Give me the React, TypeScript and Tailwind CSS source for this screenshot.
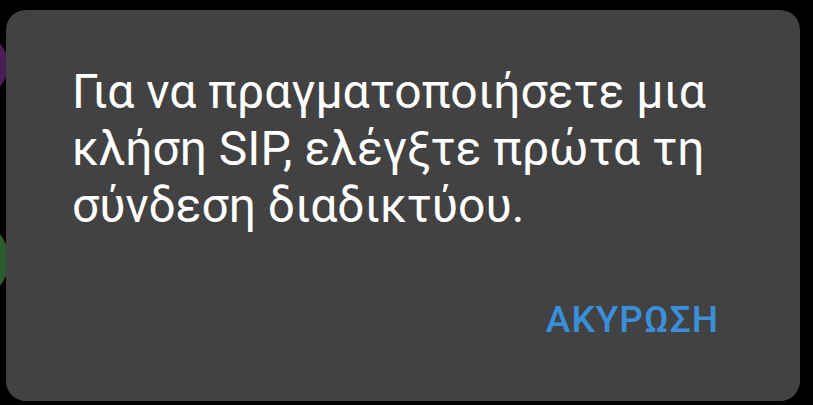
export default function App() {
  return (
    <div className="relative w-[813px] h-[405px] bg-black overflow-hidden" style={{ fontFamily: 'Roboto, "Noto Sans", sans-serif' }}>
      {/* wallpaper bits peeking out at the left edge */}
      <div className="absolute left-[-60px] top-[32px] w-[68px] h-[66px] rounded-full bg-[#4b1c58]" />
      <div className="absolute left-[-60px] top-[222px] w-[68px] h-[76px] rounded-full bg-[#2b5a2c]" />

      <div className="relative ml-[6px] mt-[10px] w-[794px] h-[391px] rounded-[20px] bg-[#424242] flex flex-col">
        <p className="pl-[66px] pt-[53px] text-[48px] leading-[57px] text-white">
          Για να πραγματοποιήσετε μια
          <br />
          κλήση SIP, ελέγξτε πρώτα τη
          <br />
          σύνδεση διαδικτύου.
        </p>
        <div className="flex justify-end pr-[81px] mt-[68px]">
          <button className="text-[37px] leading-[36px] font-medium text-[#3a8fdb] tracking-[1px]">
            ΑΚΥΡΩΣΗ
          </button>
        </div>
      </div>
    </div>
  );
}
